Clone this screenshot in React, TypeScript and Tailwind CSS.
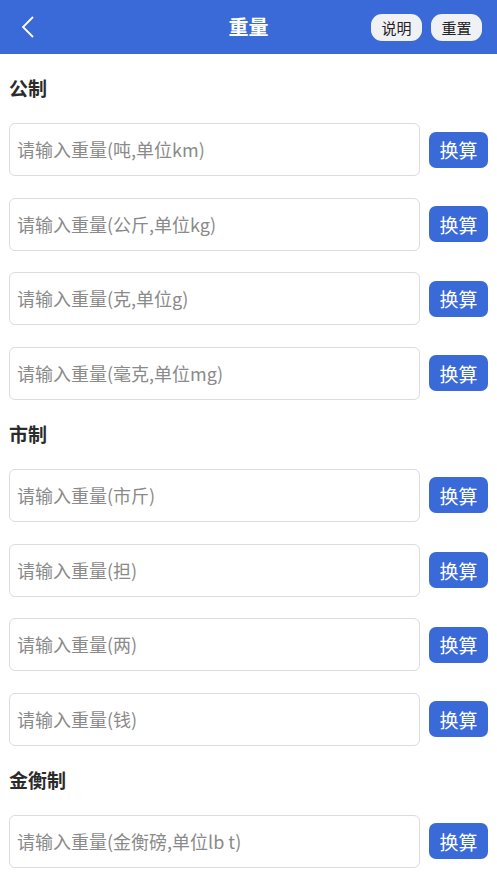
const sections = [
  {
    title: "公制",
    items: [
      "请输入重量(吨,单位km)",
      "请输入重量(公斤,单位kg)",
      "请输入重量(克,单位g)",
      "请输入重量(毫克,单位mg)",
    ],
  },
  {
    title: "市制",
    items: ["请输入重量(市斤)", "请输入重量(担)", "请输入重量(两)", "请输入重量(钱)"],
  },
  {
    title: "金衡制",
    items: ["请输入重量(金衡磅,单位lb t)"],
  },
];

const font = "font-['Noto_Sans_CJK_SC','Noto_Sans',sans-serif]";

export default function App() {
  return (
    <div className={`w-[497px] h-[883px] overflow-hidden bg-white ${font}`}>
      {/* 顶部栏 */}
      <div className="h-[54px] bg-[#3a6ad7] flex items-center px-[18px] relative">
        <svg width="16" height="24" viewBox="0 0 16 24" className="ml-[2px]">
          <path d="M13 2 L3 12 L13 22" fill="none" stroke="white" strokeWidth="1.8" />
        </svg>
        <div className="absolute left-0 right-0 text-center text-white text-[20px] font-bold pointer-events-none">
          重量
        </div>
        <div className="ml-auto flex gap-[9px] mr-[-3px]">
          <button className="w-[51px] h-[27px] rounded-[11px] bg-[#f0f1f4] text-[#222] text-[15px] leading-none">
            说明
          </button>
          <button className="w-[51px] h-[27px] rounded-[11px] bg-[#f0f1f4] text-[#222] text-[15px] leading-none">
            重置
          </button>
        </div>
      </div>

      {/* 本体 */}
      <div className="px-[9px]">
        {sections.map((s) => (
          <div key={s.title}>
            <div className="h-[69px] flex items-center text-[19px] font-bold text-[#2b2b2b]">
              {s.title}
            </div>
            <div className="flex flex-col gap-[21.67px]">
              {s.items.map((p) => (
                <div key={p} className="flex items-center">
                  <div className="w-[412px] h-[53px] border border-[#dcdcdc] rounded-[6px] flex items-center px-[7px] text-[18px] text-[#8a8a8a]">
                    {p}
                  </div>
                  <button className="ml-[9px] w-[59px] h-[36px] rounded-[7px] bg-[#3a6ad7] text-white text-[19px] leading-none">
                    换算
                  </button>
                </div>
              ))}
            </div>
          </div>
        ))}
      </div>
    </div>
  );
}
